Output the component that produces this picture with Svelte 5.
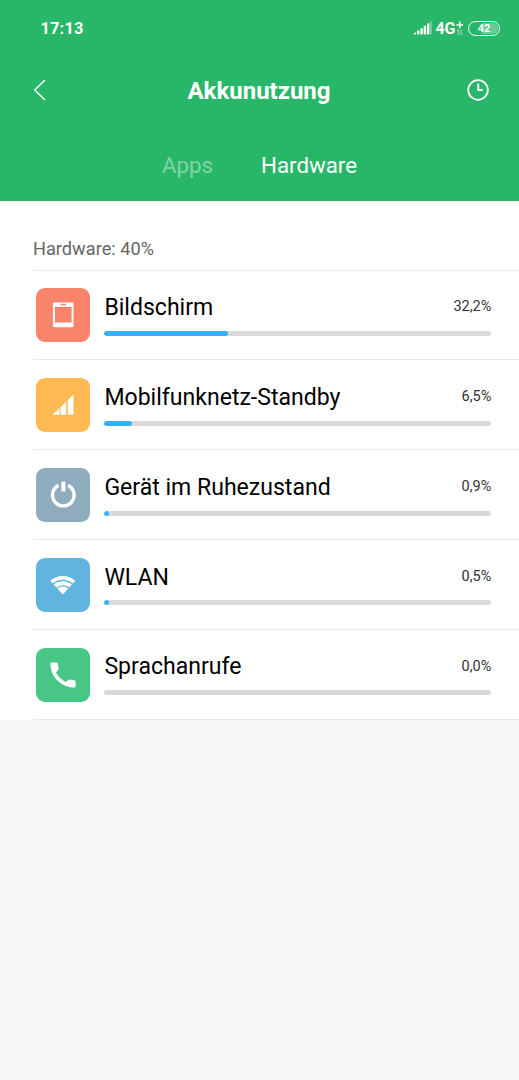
<script lang="ts">
	interface Item {
		id: string;
		name: string;
		percent: string;
		fill: number;
	}

	const tabs = ['Apps', 'Hardware'];
	let active = $state('Hardware');

	const items: Item[] = [
		{ id: 'display', name: 'Bildschirm', percent: '32,2%', fill: 32 },
		{ id: 'cell', name: 'Mobilfunknetz-Standby', percent: '6,5%', fill: 7.1 },
		{ id: 'idle', name: 'Gerät im Ruhezustand', percent: '0,9%', fill: 1.3 },
		{ id: 'wifi', name: 'WLAN', percent: '0,5%', fill: 1.3 },
		{ id: 'calls', name: 'Sprachanrufe', percent: '0,0%', fill: 0 }
	];
</script>

<div class="screen">
	<header>
		<div class="status">
			<span class="time">17:13</span>
			<svg class="signal" width="19" height="14" viewBox="0 0 19 14" fill="#fff">
				<path d="M0 13.4l2.9-2.4v2.4z" />
				<rect x="4" y="9.5" width="2.4" height="3.9" />
				<rect x="7.4" y="7.3" width="2.4" height="6.1" />
				<rect x="10.7" y="4.8" width="2.4" height="8.6" />
				<rect x="14" y="2.4" width="2.4" height="11" />
				<rect x="17" y="0.3" width="1.8" height="13.1" opacity="0.35" />
			</svg>
			<span class="network">4G</span>
			<svg class="data" width="8" height="15" viewBox="0 0 8 15" fill="none" stroke="#fff">
				<path d="M0.5 3.9h6.6M3.8 0.6v6.6" stroke-width="1.5" />
				<path d="M2.3 14V8.5L1 10M5 8.5V14l1.3-1.5" stroke-width="0.9" opacity="0.6" />
			</svg>
			<span class="battery"><span class="level">42</span></span>
		</div>

		<div class="title-bar">
			<button aria-label="Zurück">
				<svg width="14" height="24" viewBox="0 0 14 24" fill="none" stroke="#fff" stroke-width="1.5">
					<path d="M12 2L1.8 12 12 22" />
				</svg>
			</button>
			<h1>Akkunutzung</h1>
			<button aria-label="Verlauf">
				<svg width="22" height="22" viewBox="0 0 22 22" fill="none" stroke="#fff">
					<circle cx="11" cy="11" r="9.8" stroke-width="1.8" />
					<path d="M11.3 4.8v6.3h4.5" stroke-width="1.9" />
				</svg>
			</button>
		</div>

		<nav>
			{#each tabs as tab}
				<button class="tab" class:active={active === tab} onclick={() => (active = tab)}>{tab}</button>
			{/each}
		</nav>
	</header>

	<main>
		<div class="summary">Hardware: 40%</div>
		{#each items as item (item.id)}
			<div class="row">
				<div class="tile {item.id}">
					<svg width="54" height="54" viewBox="0 0 54 54" fill="#fff">
						{#if item.id === 'display'}
							<path
								fill-rule="evenodd"
								d="M18.2 14.4h18a1.3 1.3 0 0 1 1.3 1.3V38a1.3 1.3 0 0 1-1.3 1.3h-18a1.3 1.3 0 0 1-1.3-1.3V15.7a1.3 1.3 0 0 1 1.3-1.3zM18.9 19v15.5h16.7V19zM24.6 15.8v1.5h5.6v-1.5z"
							/>
						{:else if item.id === 'cell'}
							<path d="M16.4 36.8l7.2-6.9v6.9zM24.7 28.9l5.5-5.3v13.2h-5.5zM31.8 22.1l5.7-5.5v20.2h-5.7z" />
						{:else if item.id === 'idle'}
							<path d="M22.6 17.4a10.8 10.8 0 1 0 9.4 0" fill="none" stroke="#fff" stroke-width="3.4" />
							<rect x="25.4" y="13.6" width="4" height="9.8" />
						{:else if item.id === 'wifi'}
							<path d="M26.8 36.6L14.2 22.7a18.9 18.9 0 0 1 25.2 0z" />
							<path d="M16.7 26.4a15 15 0 0 1 20.2 0M20.3 30.5a9.3 9.3 0 0 1 13 0" fill="none" class="gap" />
						{:else}
							<path
								d="M15.4 14.5H20.6Q21.6 14.5 21.8 15.5L22.7 20.6Q22.8 21.4 22.2 22L20 24.4C22.2 28.6 25.4 31.9 29.8 34.1L32.2 31.9Q32.8 31.3 33.6 31.4L38.6 32.2Q39.6 32.4 39.6 33.4V38.5Q39.6 39.6 38.5 39.6C25.2 39.6 14.4 28.9 14.4 15.5Q14.4 14.5 15.4 14.5z"
							/>
						{/if}
					</svg>
				</div>
				<div class="info">
					<div class="labels">
						<span class="name">{item.name}</span>
						<span class="percent">{item.percent}</span>
					</div>
					<div class="track">
						<div class="fill" style="width: {item.fill}%"></div>
					</div>
				</div>
			</div>
		{/each}
	</main>
</div>

<style>
	:global(body) {
		margin: 0;
		background: #f7f7f7;
	}

	.screen {
		width: 100%;
		min-height: 1080px;
		background: #f7f7f7;
		font-family: Roboto, sans-serif;
	}

	header {
		box-sizing: border-box;
		height: 200.6px;
		background: #28b768;
		color: #fff;
	}

	button {
		display: flex;
		padding: 0;
		border: none;
		background: none;
		color: inherit;
		font: inherit;
		cursor: pointer;
	}

	.status {
		display: flex;
		align-items: center;
		height: 56px;
		padding: 0 19px 0 40.5px;
	}

	.time {
		flex: 1;
		font-size: 16.4px;
		font-weight: 700;
		letter-spacing: 0.15px;
	}

	.network {
		margin-left: 4px;
		font-size: 16px;
		font-weight: 700;
		letter-spacing: -0.3px;
	}

	.data {
		margin: 0 4px 0 1px;
	}

	.battery {
		box-sizing: border-box;
		width: 32px;
		height: 15px;
		padding: 1px;
		border: 1.5px solid #fff;
		border-radius: 8px;
	}

	.level {
		display: block;
		height: 11px;
		border-radius: 5.5px;
		background: linear-gradient(90deg, transparent 42%, rgba(255, 255, 255, 0.3) 42%);
		font-size: 11px;
		font-weight: 700;
		line-height: 12px;
		text-align: center;
	}

	.title-bar {
		display: flex;
		align-items: center;
		justify-content: space-between;
		height: 68px;
		padding: 0 30px 0 33px;
	}

	h1 {
		margin: 2px 0 0 4px;
		font-size: 24px;
		font-weight: 700;
		line-height: 28px;
	}

	nav {
		display: flex;
		justify-content: center;
		gap: 48px;
		padding-top: 27px;
	}

	.tab {
		font-size: 22.3px;
		line-height: 28px;
		opacity: 0.4;
	}

	.tab.active {
		opacity: 1;
	}

	main {
		padding-left: 33px;
		background: #fff;
	}

	.summary {
		box-sizing: border-box;
		height: 70px;
		padding-top: 37.2px;
		border-bottom: 1px solid #e8e8e8;
		color: #666;
		font-size: 18.2px;
		line-height: 22px;
	}

	.row {
		box-sizing: border-box;
		display: flex;
		gap: 14px;
		height: 89.8px;
		padding: 17.9px 27.7px 0 3.4px;
		border-bottom: 1px solid #e8e8e8;
	}

	.tile {
		width: 54px;
		height: 54px;
		border-radius: 9px;
		overflow: hidden;
	}

	.display {
		background: #fa8469;
	}

	.cell {
		background: #feb954;
	}

	.idle {
		background: #8eacbe;
	}

	.wifi {
		background: #61b3e0;
	}

	.calls {
		background: #48c686;
	}

	.gap {
		stroke: #61b3e0;
		stroke-width: 1.3;
	}

	.info {
		flex: 1;
	}

	.labels {
		display: flex;
		align-items: center;
		justify-content: space-between;
		height: 37px;
	}

	.name {
		padding-top: 1.4px;
		color: #000;
		font-size: 23.05px;
	}

	.percent {
		color: #333;
		font-size: 14.5px;
	}

	.track {
		height: 5px;
		margin-top: 5.6px;
		border-radius: 3px;
		background: #d9d9d9;
		overflow: hidden;
	}

	.fill {
		height: 100%;
		border-radius: 3px;
		background: #36b0fc;
	}
</style>
